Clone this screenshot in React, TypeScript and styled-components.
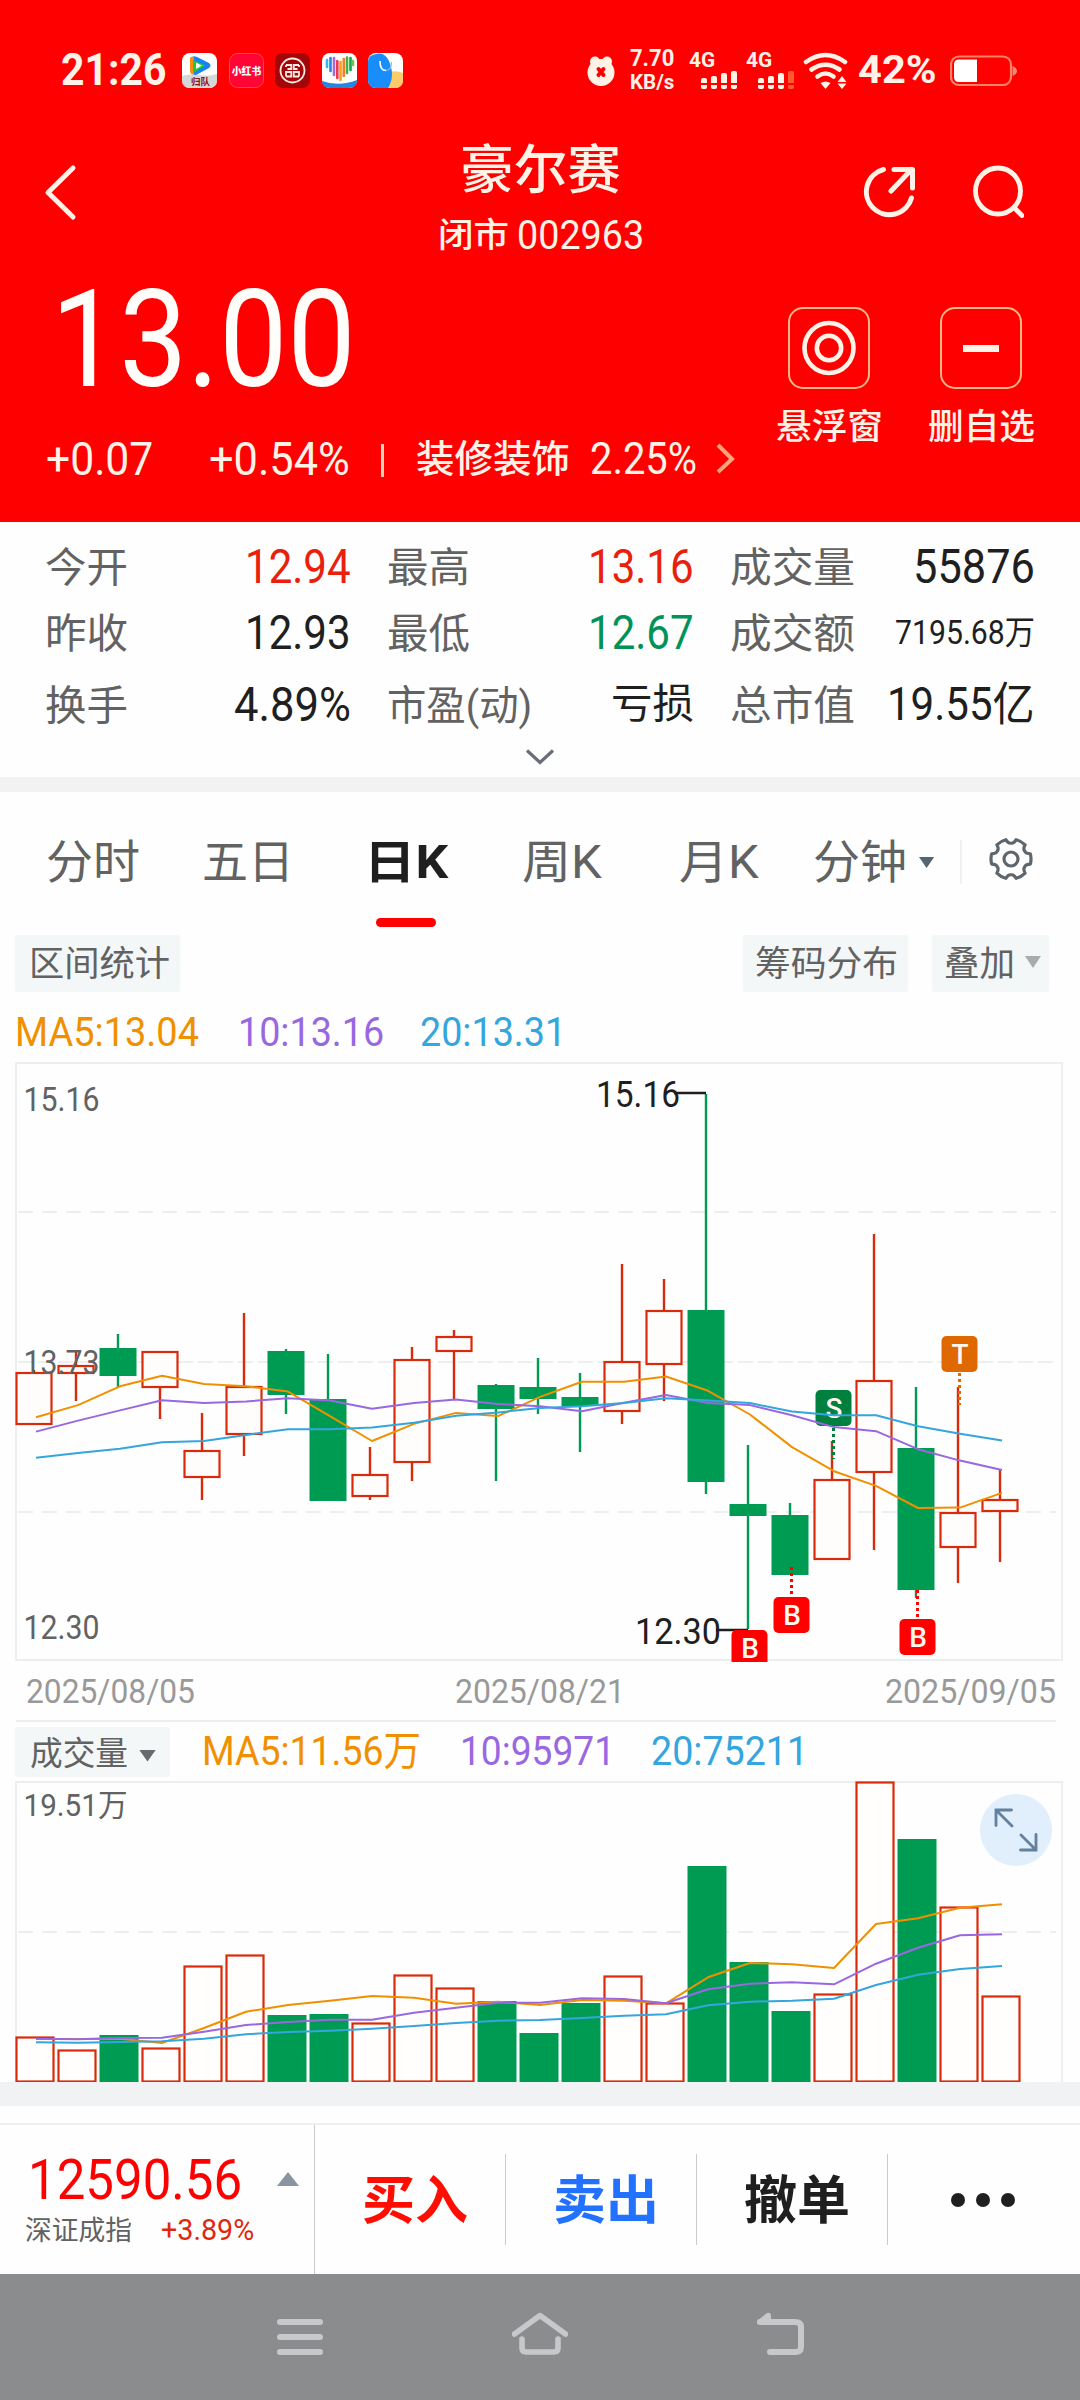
import React, { useLayoutEffect, useRef, useState } from "react";
import styled, { createGlobalStyle } from "styled-components";

const C = {
  red: "#ff0000",
  up: "#d92b0b",
  down: "#009b53",
  cream: "#fff3e8",
  label: "#626262",
  ink: "#1f1f1f",
  ma5: "#f09000",
  ma10: "#9968e0",
  ma20: "#35a5dd",
  line: "#eceeef",
};

const Global = createGlobalStyle`
  html, body { margin: 0; padding: 0; background: #fdfefd; }
  * { box-sizing: border-box; }
  body { font-family: Roboto, "Noto Sans CJK SC", sans-serif; }
  svg { display: block; flex: none; }
`;

/* ---------- text that is condensed to a fixed width ---------- */

const FitBox = styled.span<{ $w: number; $ml: number }>`
  display: block;
  flex: none;
  width: ${(p) => p.$w}px;
  margin-left: ${(p) => p.$ml}px;
  white-space: nowrap;
`;
const FitInner = styled.span<{ $size: number; $color: string; $weight: number }>`
  display: inline-block;
  vertical-align: top;
  transform-origin: 0 50%;
  font-size: ${(p) => p.$size}px;
  line-height: ${(p) => Math.round(p.$size * 1.2)}px;
  color: ${(p) => p.$color};
  font-weight: ${(p) => p.$weight};
`;

type FitProps = { w: number; size: number; color?: string; weight?: number; ml?: number; children: string };

function Fit({ w, size, color = C.ink, weight = 400, ml = 0, children }: FitProps) {
  const ref = useRef<HTMLSpanElement>(null);
  const [scale, setScale] = useState(1);
  useLayoutEffect(() => {
    if (ref.current) setScale(w / ref.current.offsetWidth);
  }, [w, size, children]);
  return (
    <FitBox $w={w} $ml={ml}>
      <FitInner ref={ref} $size={size} $color={color} $weight={weight} style={{ transform: `scaleX(${scale})` }}>
        {children}
      </FitInner>
    </FitBox>
  );
}

/* ---------- page ---------- */

const Page = styled.main`
  width: 1080px;
  height: 2400px;
  overflow: hidden;
  display: flex;
  flex-direction: column;
  background: #fdfefd;
`;

/* ---------- red header ---------- */

const Header = styled.header`
  height: 522px;
  background: ${C.red};
`;
const StatusBar = styled.div`
  height: 141px;
  padding: 0 62px 0 60px;
  display: flex;
  align-items: center;
  justify-content: space-between;
`;
const StatusGroup = styled.div`
  display: flex;
  align-items: center;
`;
const AppIcons = styled.div`
  display: flex;
  gap: 11.5px;
  margin-left: 16px;
`;
const Speed = styled.div`
  display: flex;
  flex-direction: column;
  align-items: center;
  margin-left: 15px;
`;
const SpeedLine = styled.div`
  height: 23px;
  display: flex;
  align-items: center;
`;
const Signal = styled.div<{ $ml: number }>`
  margin-left: ${(p) => p.$ml}px;
  width: 49px;
  height: 38px;
`;
const SignalName = styled.div`
  height: 17px;
  display: flex;
  align-items: center;
`;
const SignalBars = styled.div`
  display: flex;
  align-items: flex-end;
  gap: 4px;
  padding-left: 12px;
  height: 20px;
`;
const Bar = styled.i<{ $h: number; $dim?: boolean }>`
  width: 6px;
  height: ${(p) => p.$h}px;
  border-radius: 2px;
  background: linear-gradient(to top, ${(p) => (p.$dim ? "#ff5a2c" : C.cream)} 4px, transparent 4px, transparent 6px, ${(p) => (p.$dim ? "#ff5a2c" : C.cream)} 6px);
`;
const TitleBar = styled.div`
  height: 121px;
  padding: 0 56px 0 42px;
  display: flex;
  justify-content: space-between;
`;
const TitleSide = styled.div<{ $end?: boolean }>`
  width: 240px;
  padding-top: 22px;
  display: flex;
  gap: 57px;
  justify-content: ${(p) => (p.$end ? "flex-end" : "flex-start")};
`;
const Title = styled.div`
  display: flex;
  flex-direction: column;
  align-items: center;
  margin-left: 15px;
  margin-top: -2px;
`;
const SubTitle = styled.div`
  display: flex;
  align-items: center;
  gap: 8px;
  margin-top: 8px;
`;
const Quote = styled.div`
  display: flex;
  justify-content: space-between;
  padding: 0 45px 0 46px;
`;
const Price = styled.div`
  margin-top: -4px;
`;
const ChangeRow = styled.div`
  display: flex;
  align-items: center;
  height: 50px;
  margin-top: 13px;
`;
const Sep = styled.i`
  width: 3px;
  height: 33px;
  background: #ffd2b8;
  margin: 3px 0 0 31px;
`;
const Actions = styled.div`
  display: flex;
  gap: 44px;
  padding-top: 45px;
`;
const Action = styled.div`
  display: flex;
  flex-direction: column;
  align-items: center;
  gap: 18px;
  width: 108px;
`;
const ActionBox = styled.div`
  width: 82px;
  height: 82px;
  border: 2px solid #ffb48a;
  border-radius: 15px;
  display: flex;
  align-items: center;
  justify-content: center;
`;
const Minus = styled.i`
  width: 36px;
  height: 7px;
  background: ${C.cream};
`;

/* ---------- statistics ---------- */

const Stats = styled.section`
  height: 255px;
  padding: 11px 45px 0 45px;
`;
const StatGrid = styled.div`
  display: grid;
  grid-template-columns: 306px 307px 1fr;
  column-gap: 36px;
  grid-template-rows: 67px 66px 77px;
`;
const Stat = styled.div`
  display: flex;
  justify-content: space-between;
  align-items: center;
`;
const StatLabel = styled.div`
  padding-top: 3px;
`;
const Expand = styled.div`
  display: flex;
  justify-content: center;
  margin-top: 4px;
`;
const Band = styled.div<{ $h: number; $c: string }>`
  flex: none;
  height: ${(p) => p.$h}px;
  background: ${(p) => p.$c};
`;

/* ---------- tabs and tools ---------- */

const Tabs = styled.nav`
  height: 138px;
  padding: 29px 46px 0 46px;
  display: flex;
  align-items: flex-start;
`;
const Tab = styled.div<{ $ml: number }>`
  margin-left: ${(p) => p.$ml}px;
  height: 106px;
  display: flex;
  flex-direction: column;
  justify-content: space-between;
  padding-top: 14px;
`;
const Underline = styled.i`
  width: 60px;
  height: 9px;
  border-radius: 5px;
  background: ${C.red};
  margin-left: 12px;
`;
const TabRule = styled.i`
  width: 2px;
  height: 44px;
  margin: 19px 26px 0 26px;
  background: #f0f1f2;
`;
const Caret = styled.i<{ $c: string; $up?: boolean; $w: number; $h: number; $m: string }>`
  width: ${(p) => p.$w}px;
  height: ${(p) => p.$h}px;
  margin: ${(p) => p.$m};
  background: ${(p) => p.$c};
  clip-path: ${(p) => (p.$up ? "polygon(50% 0, 100% 100%, 0 100%)" : "polygon(0 0, 100% 0, 50% 100%)")};
`;
const Gear = styled.div`
  padding-top: 14px;
`;
const Tools = styled.div`
  height: 63px;
  display: flex;
  align-items: center;
  padding: 4px 31px 0 15px;
`;
const Chip = styled.div<{ $w: number; $h: number; $pl: number }>`
  display: flex;
  align-items: center;
  width: ${(p) => p.$w}px;
  height: ${(p) => p.$h}px;
  padding: 3px 0 0 ${(p) => p.$pl}px;
  background: #f4f7f7;
  border-radius: 3px;
`;
const Spacer = styled.i<{ $w?: number }>`
  flex: ${(p) => (p.$w ? `0 0 ${p.$w}px` : "1")};
`;
const Legend = styled.div<{ $h: number; $pt?: number }>`
  height: ${(p) => p.$h}px;
  display: flex;
  align-items: center;
  padding: ${(p) => p.$pt ?? 0}px 0 0 15px;
`;
const Dates = styled.div`
  height: 60px;
  margin: 0 24px 0 16px;
  padding: 0 0 0 10px;
  display: flex;
  align-items: center;
  justify-content: space-between;
  border-bottom: 2px solid ${C.line};
`;
const VolumeWrap = styled.div`
  position: relative;
  height: 301px;
`;
const ZoomButton = styled.div`
  position: absolute;
  right: 28px;
  top: 13px;
  width: 72px;
  height: 72px;
  border-radius: 50%;
  background: #e0effb;
`;

/* ---------- trade bar and system navigation ---------- */

const TradeBar = styled.footer`
  margin-top: 17px;
  height: 151px;
  border-top: 2px solid #eef0f1;
  display: flex;
`;
const IndexCell = styled.div`
  width: 315px;
  border-right: 1px solid #c9cccf;
  padding: 22px 0 0 26px;
  display: flex;
`;
const IndexText = styled.div`
  width: 232px;
`;
const IndexSub = styled.div`
  display: flex;
  align-items: center;
  margin-top: -1px;
`;
const TradeButton = styled.div<{ $last?: boolean }>`
  width: 191px;
  height: 91px;
  margin-top: 29px;
  padding: ${(p) => (p.$last ? "0 2px 0 0" : "5px 0 0 9px")};
  display: flex;
  align-items: center;
  justify-content: center;
  border-right: ${(p) => (p.$last ? "0" : "1px solid #c9cccf")};
`;
const Dots = styled.div`
  display: flex;
  gap: 11px;
`;
const Dot = styled.i`
  width: 14px;
  height: 14px;
  border-radius: 50%;
  background: ${C.ink};
`;
const SystemNav = styled.div`
  height: 126px;
  background: #8a8c8e;
  display: flex;
  justify-content: center;
  gap: 184px;
  padding-top: 35px;
`;

/* ---------- chart data ---------- */

type Candle = { up: boolean; top: number; bottom: number; high: number; low: number; vol: number };
const K = (up: number, top: number, bottom: number, high: number, low: number, vol: number): Candle => ({
  up: !!up, top, bottom, high, low, vol,
});

const candles: Candle[] = [
  K(1, 1373, 1424, 1370, 1424, 2037),
  K(1, 1366, 1373, 1352, 1401, 2050),
  K(0, 1348, 1376, 1334, 1388, 2035),
  K(1, 1352, 1387, 1352, 1419, 2048),
  K(1, 1451, 1477, 1413, 1500, 1966),
  K(1, 1387, 1434, 1313, 1456, 1955),
  K(0, 1351, 1395, 1349, 1414, 2015),
  K(0, 1399, 1501, 1354, 1501, 2014),
  K(1, 1475, 1496, 1447, 1500, 2023),
  K(1, 1360, 1462, 1347, 1481, 1975),
  K(1, 1337, 1351, 1330, 1400, 1988),
  K(0, 1385, 1409, 1384, 1481, 2001),
  K(0, 1387, 1399, 1358, 1414, 2033),
  K(0, 1397, 1406, 1373, 1452, 2003),
  K(1, 1362, 1411, 1264, 1424, 1976),
  K(1, 1311, 1364, 1279, 1401, 2003),
  K(0, 1310, 1482, 1094, 1494, 1866),
  K(0, 1504, 1516, 1445, 1629, 1962),
  K(0, 1515, 1575, 1503, 1575, 2011),
  K(1, 1480, 1559, 1441, 1559, 1994),
  K(1, 1381, 1472, 1234, 1550, 1782),
  K(0, 1448, 1590, 1387, 1598, 1839),
  K(1, 1513, 1547, 1387, 1583, 1907),
  K(1, 1500, 1511, 1470, 1562, 1996),
];

const price = {
  ma5: [900, 870, 824, 798, 818, 824, 837, 897, 958, 916, 889, 897, 850, 813, 813, 800, 835, 893, 973, 1032, 1068, 1122, 1121, 1085],
  ma10: [935, 908, 883, 858, 865, 861, 853, 859, 879, 865, 856, 867, 873, 885, 864, 845, 865, 870, 895, 924, 934, 978, 1006, 1029],
  ma20: [999, 987, 977, 961, 958, 943, 929, 929, 925, 913, 896, 888, 877, 873, 865, 853, 859, 865, 886, 895, 895, 922, 940, 957],
};
const volume = {
  ma5: [1167, 1167, 1166, 1179, 1134, 1085, 1065, 1052, 1038, 1043, 1061, 1055, 1065, 1050, 1052, 1060, 982, 939, 943, 954, 822, 805, 773, 763],
  ma10: [1166, 1168, 1164, 1163, 1145, 1125, 1116, 1109, 1109, 1088, 1073, 1058, 1058, 1045, 1047, 1060, 1018, 1001, 997, 1003, 941, 893, 856, 853],
  ma20: [1177, 1178, 1176, 1174, 1166, 1153, 1146, 1142, 1136, 1128, 1119, 1112, 1110, 1104, 1097, 1093, 1066, 1055, 1052, 1046, 1005, 974, 957, 948],
};

const STEP = 42;
const toPoints = (values: number[], base: number, scale: number) =>
  values.map((v, i) => `${36 + STEP * i},${(base + v / scale).toFixed(1)}`).join(" ");

function Lines({ set, base, scale }: { set: typeof price; base: number; scale: number }) {
  return (
    <g fill="none" strokeWidth="2" strokeLinejoin="round">
      <polyline points={toPoints(set.ma5, base, scale)} stroke={C.ma5} />
      <polyline points={toPoints(set.ma10, base, scale)} stroke={C.ma10} />
      <polyline points={toPoints(set.ma20, base, scale)} stroke={C.ma20} />
    </g>
  );
}

const ChartText = styled.text<{ $size: number; $c: string; $weight?: number }>`
  font-family: Roboto, "Noto Sans CJK SC", sans-serif;
  font-size: ${(p) => p.$size}px;
  font-weight: ${(p) => p.$weight ?? 400};
  fill: ${(p) => p.$c};
`;

function Label({ x, y, w, size, c, children }: { x: number; y: number; w: number; size: number; c: string; children: string }) {
  return (
    <ChartText x={x} y={y} $size={size} $c={c} textLength={w} lengthAdjust="spacingAndGlyphs">
      {children}
    </ChartText>
  );
}

type MarkProps = { x: number; y: number; c: string; t: string; from?: number; to?: number };
function Mark({ x, y, c, t, from, to }: MarkProps) {
  return (
    <g>
      {from !== undefined && (
        <line x1={x} x2={x} y1={from} y2={to} stroke={c} strokeWidth="3" strokeDasharray="3 3" />
      )}
      <rect x={x - 18} y={y} width="36" height="36" rx="5" fill={c} />
      <ChartText x={x + 0.5} y={y + 28} $size={28} $c="#fff8f0" $weight={500} textAnchor="middle">
        {t}
      </ChartText>
    </g>
  );
}

function PriceChart() {
  return (
    <svg width="1080" height="600" viewBox="0 1062 1080 600">
      <g stroke={C.line} strokeWidth="2" fill="none">
        <path d="M16 1063H1062V1660H16Z" />
        <path d="M18 1212H1056M18 1512H1056" strokeDasharray="15 9" />
        <path d="M18 1362H1056" strokeDasharray="15 5" />
      </g>
      {candles.map((k, i) => {
        const cx = 34 + STEP * i;
        const col = k.up ? C.up : C.down;
        return (
          <g key={i}>
            <path d={`M${cx} ${k.high}V${k.top}M${cx} ${k.bottom}V${k.low}`} stroke={col} strokeWidth="2.4" />
            {k.up ? (
              <rect x={cx - 17.5} y={k.top} width="35" height={k.bottom - k.top} fill="#fffdfc" stroke={col} strokeWidth="2.2" />
            ) : (
              <rect x={cx - 18.5} y={k.top} width="37" height={k.bottom - k.top} fill={col} />
            )}
          </g>
        );
      })}
      <Label x={23.5} y={1111} w={76} size={33} c={C.label}>15.16</Label>
      <Label x={23.5} y={1374} w={76} size={33} c={C.label}>13.73</Label>
      <Label x={23.5} y={1639} w={76} size={33} c={C.label}>12.30</Label>
      <Label x={596} y={1107} w={84} size={36} c={C.ink}>15.16</Label>
      <Label x={635} y={1644} w={86} size={36} c={C.ink}>12.30</Label>
      <path d="M674 1093H706M716 1630H748" stroke={C.ink} strokeWidth="2.4" />
      <Mark x={833.5} y={1390} c="#00803f" t="S" from={1428} to={1459} />
      <Mark x={959.5} y={1336} c="#e06800" t="T" from={1373} to={1405} />
      <Mark x={749.5} y={1630} c={C.red} t="B" />
      <Mark x={791.5} y={1597} c={C.red} t="B" from={1567} to={1596} />
      <Mark x={917.5} y={1619} c={C.red} t="B" from={1590} to={1618} />
      <Lines set={price} base={1050} scale={2.45} />
    </svg>
  );
}

function VolumeChart() {
  return (
    <svg width="1080" height="301" viewBox="0 1781 1080 301">
      <g stroke={C.line} strokeWidth="2" fill="none">
        <path d="M16 2082V1782H1062V2082" />
        <path d="M18 1932H1056" strokeDasharray="15 9" />
      </g>
      {candles.map((k, i) => {
        const x = 15.5 + STEP * i;
        return k.up ? (
          <rect key={i} x={x + 1} y={k.vol + 0.5} width="37" height={2081 - k.vol} fill="#fffefd" stroke={C.up} strokeWidth="2.2" />
        ) : (
          <rect key={i} x={x} y={k.vol} width="39" height={2082 - k.vol} fill={C.down} />
        );
      })}
      <Label x={23.5} y={1815.5} w={104} size={31} c={C.label}>19.51万</Label>
      <Lines set={volume} base={1650} scale={3} />
    </svg>
  );
}

/* gear outline: a circle with six rounded notches */
const polar = (deg: number, r: number) => {
  const a = (deg * Math.PI) / 180;
  return `${(23 + r * Math.cos(a)).toFixed(2)} ${(24 + r * Math.sin(a)).toFixed(2)}`;
};
const gearPath =
  [0, 1, 2, 3, 4, 5]
    .map((n) => {
      const a = -90 + 60 * n;
      return `${n ? "A20 20 0 0 1" : "M"}${polar(a - 15, 20)}Q${polar(a - 10, 15.5)} ${polar(a, 15.8)}Q${polar(a + 10, 15.5)} ${polar(a + 15, 20)}`;
    })
    .join("") + `A20 20 0 0 1 ${polar(-105, 20)}Z`;

/* ---------- status icons ---------- */

function StatusApps() {
  return (
    <AppIcons>
      <svg width="35" height="35" viewBox="0 0 35 35">
        <rect width="35" height="35" rx="8" fill="#fff" />
        <path d="M0 23Q8 20 17 22T35 21V27Q35 35 27 35H8Q0 35 0 27Z" fill="#d6d8d5" />
        <path d="M9 5Q11 2 15 4L27 10Q30 12.500 27 15L14 22Q10 22 9 19Z" fill="#1185f5" />
        <path d="M8 5Q9 3 12 4L12 21Q9 22 8 19Z" fill="#ff8a13" />
        <path d="M11 7L23 12.500L11 20Z" fill="#21cc28" />
        <path d="M14 9.500L20 12.500L14 16Z" fill="#fff" />
        <ChartText x="18.500" y="32" $size={9.5} $c="#8c1020" $weight={700} textAnchor="middle">归队</ChartText>
      </svg>
      <svg width="35" height="35" viewBox="0 0 35 35">
        <rect x=".5" y=".5" width="34" height="34" rx="8" fill="#ff0536" stroke="#ff4a3a" />
        <ChartText x="17.500" y="21.500" $size={9.8} $c="#fff" $weight={900} textAnchor="middle">小红书</ChartText>
      </svg>
      <svg width="35" height="35" viewBox="0 0 35 35">
        <rect width="35" height="35" rx="8" fill="#a30508" />
        <g fill="none" stroke="#ffe9e4" strokeWidth="1.800">
          <circle cx="17.500" cy="17.500" r="12" />
          <path d="M11 12H16.300V16H12.500M11 23.500H16.300V19H11V23.500M24 12H18.800V16H22.500M24 23.500H18.800V19H24V23.500M11 12V14M24 12V14" />
        </g>
      </svg>
      <svg width="35" height="35" viewBox="0 0 35 35">
        <rect width="35" height="35" rx="8" fill="#fff" />
        <path d="M0 28Q17 34 35 27Q35 35 27 35H8Q0 35 0 28Z" fill="#2585e0" />
        <g strokeWidth="2.600" strokeLinecap="round">
          <path d="M5 7V14" stroke="#38b4ef" />
          <path d="M8.500 5V18" stroke="#2586df" />
          <path d="M12 5V22" stroke="#a869d4" />
          <path d="M15.300 8V25" stroke="#ee3b4b" />
          <path d="M18.500 9V27" stroke="#f6a219" />
          <path d="M21.800 6V23" stroke="#ef7f28" />
          <path d="M25 4.500V20" stroke="#39b54a" />
          <path d="M28.500 5V17" stroke="#0da845" />
          <path d="M31 8V12" stroke="#74c642" />
        </g>
      </svg>
      <svg width="35" height="35" viewBox="0 0 35 35">
        <rect width="35" height="35" rx="8" fill="#fff" />
        <path d="M21 19Q29 17 35 20V27Q35 35 27 35H18Z" fill="#fdcb69" />
        <path d="M8 1Q15-1 20 6Q28 22 20 35H8Q0 35 0 27V9Q0 2 8 1Z" fill="#188dfb" />
        <path d="M12 8Q12 17.500 18 17.500" fill="none" stroke="#fff" strokeWidth="1.600" />
        <path d="M18 17.500Q23.500 17 23.500 9" fill="none" stroke="#8fb8d8" strokeWidth="1.200" />
      </svg>
    </AppIcons>
  );
}

function StatusRight() {
  return (
    <StatusGroup>
      <svg width="28" height="32" viewBox="0 0 28 32">
        <circle cx="8" cy="6.500" r="5" fill={C.cream} />
        <circle cx="20" cy="6.500" r="5" fill={C.cream} />
        <ellipse cx="14" cy="17.500" rx="13.500" ry="13.500" fill={C.cream} />
        <path d="M11.500 14L16.500 20M16.500 14L11.500 20" stroke={C.red} strokeWidth="4" strokeLinecap="round" />
      </svg>
      <Speed>
        <SpeedLine><Fit w={44} size={23} weight={700} color={C.cream}>7.70</Fit></SpeedLine>
        <SpeedLine><Fit w={44} size={21} weight={700} color={C.cream}>KB/s</Fit></SpeedLine>
      </Speed>
      <Signal $ml={15}>
        <SignalName><Fit w={26} size={20} weight={700} color={C.cream}>4G</Fit></SignalName>
        <SignalBars><Bar $h={11} /><Bar $h={13} /><Bar $h={16} /><Bar $h={18} /></SignalBars>
      </Signal>
      <Signal $ml={8}>
        <SignalName><Fit w={26} size={20} weight={700} color={C.cream}>4G</Fit></SignalName>
        <SignalBars><Bar $h={11} /><Bar $h={13} /><Bar $h={16} /><Bar $h={18} $dim /></SignalBars>
      </Signal>
      <svg width="46" height="38" viewBox="0 0 46 38" style={{ marginLeft: 8 }}>
        <g fill="none" stroke={C.cream} strokeWidth="4.600" strokeLinecap="round">
          <path d="M3 10Q22.500-4 42 10" />
          <path d="M8.500 17.500Q22.500 8 36.500 17.500" />
          <path d="M14.500 24.500Q22.500 18.500 30.500 24.500" />
        </g>
        <path d="M22.500 37L17.500 31Q22.500 28 27.500 31Z" fill={C.cream} />
        <path d="M39 24L43.500 30H34.500ZM39 37L43.500 31.500H34.500Z" fill={C.cream} />
      </svg>
      <Fit ml={9} w={79} size={39} weight={700} color={C.cream}>42%</Fit>
      <svg width="68" height="32" viewBox="0 0 68 32" style={{ marginLeft: 13 }}>
        <rect x="1" y="1.500" width="60" height="28.500" rx="8" fill="none" stroke="#ff8266" strokeWidth="2.200" />
        <path d="M9 4.500H27V27H9Q4 27 4 22V9.500Q4 4.500 9 4.500Z" fill="#fff" />
        <path d="M62.500 11Q67 13 67 16T62.500 21Z" fill="#e88a72" />
      </svg>
    </StatusGroup>
  );
}

type StatItem = { label: string; lw: number; value: string; vw: number; size?: number; color?: string };
const stats: StatItem[] = [
  { label: "今开", lw: 83, value: "12.94", vw: 106, color: "#e8200c" },
  { label: "最高", lw: 83, value: "13.16", vw: 106, color: "#e8200c" },
  { label: "成交量", lw: 125, value: "55876", vw: 122 },
  { label: "昨收", lw: 83, value: "12.93", vw: 106 },
  { label: "最低", lw: 83, value: "12.67", vw: 106, color: "#009358" },
  { label: "成交额", lw: 125, value: "7195.68万", vw: 140, size: 33 },
  { label: "换手", lw: 83, value: "4.89%", vw: 117 },
  { label: "市盈(动)", lw: 145, value: "亏损", vw: 83, size: 41 },
  { label: "总市值", lw: 125, value: "19.55亿", vw: 148, size: 46 },
];

const tabs = [
  { name: "分时", w: 94, ml: 0 },
  { name: "五日", w: 92, ml: 62 },
  { name: "日K", w: 84, ml: 70, active: true },
  { name: "周K", w: 80, ml: 74 },
  { name: "月K", w: 80, ml: 77 },
  { name: "分钟", w: 94, ml: 54 },
];

export default function App() {
  return (
    <Page>
      <Global />
      <Header>
        <StatusBar>
          <StatusGroup>
            <Fit ml={1} w={105} size={44} weight={700} color={C.cream}>21:26</Fit>
            <StatusApps />
          </StatusGroup>
          <StatusRight />
        </StatusBar>
        <TitleBar>
          <TitleSide>
            <svg width="36" height="60" viewBox="0 0 36 60">
              <path d="M31 5L6 29.500L31 54" fill="none" stroke={C.cream} strokeWidth="5" strokeLinecap="round" strokeLinejoin="round" />
            </svg>
          </TitleSide>
          <Title>
            <Fit w={161} size={53} weight={500} color={C.cream}>豪尔赛</Fit>
            <SubTitle>
              <Fit w={71} size={34} weight={500} color={C.cream}>闭市</Fit>
              <Fit w={127} size={41} color={C.cream}>002963</Fit>
            </SubTitle>
          </Title>
          <TitleSide $end>
            <svg width="52" height="56" viewBox="0 0 52 56">
              <g fill="none" stroke={C.cream} strokeWidth="5" strokeLinecap="round" strokeLinejoin="round">
                <path d="M20.500 6.500A23 23 0 1 0 48.500 35" />
                <path d="M28 28L48.500 6.500M31 6.500H49.500V25" />
              </g>
            </svg>
            <svg width="52" height="56" viewBox="0 0 52 56">
              <g fill="none" stroke={C.cream} strokeWidth="4.800" strokeLinecap="round">
                <ellipse cx="26" cy="28" rx="22.500" ry="23" />
                <path d="M43 45.500L50 52.500" />
              </g>
            </svg>
          </TitleSide>
        </TitleBar>
        <Quote>
          <Price>
            <Fit ml={5} w={305} size={136} color="#fffefa">13.00</Fit>
            <ChangeRow>
              <Fit w={107} size={47} color={C.cream}>+0.07</Fit>
              <Fit ml={56} w={141} size={47} color={C.cream}>+0.54%</Fit>
              <Sep />
              <Fit ml={32} w={154} size={38} weight={500} color={C.cream}>装修装饰</Fit>
              <Fit ml={20} w={107} size={44} color={C.cream}>2.25%</Fit>
              <svg width="22" height="34" viewBox="0 0 22 34" style={{ marginLeft: 17 }}>
                <path d="M4 3L18 17L4 30" fill="none" stroke="#ffa77c" strokeWidth="4" />
              </svg>
            </ChangeRow>
          </Price>
          <Actions>
            <Action>
              <ActionBox>
                <svg width="56" height="58" viewBox="0 0 56 58">
                  <ellipse cx="28" cy="29" rx="24.500" ry="25" fill="none" stroke={C.cream} strokeWidth="4.600" />
                  <circle cx="28" cy="29" r="12.200" fill="none" stroke={C.cream} strokeWidth="4.600" />
                </svg>
              </ActionBox>
              <Fit w={107} size={35} weight={500} color={C.cream}>悬浮窗</Fit>
            </Action>
            <Action>
              <ActionBox><Minus /></ActionBox>
              <Fit w={107} size={35} weight={500} color={C.cream}>删自选</Fit>
            </Action>
          </Actions>
        </Quote>
      </Header>

      <Stats>
        <StatGrid>
          {stats.map((s) => (
            <Stat key={s.label}>
              <StatLabel><Fit w={s.lw} size={41} color={C.label}>{s.label}</Fit></StatLabel>
              <Fit w={s.vw} size={s.size ?? 48} color={s.color ?? C.ink}>{s.value}</Fit>
            </Stat>
          ))}
        </StatGrid>
        <Expand>
          <svg width="32" height="20" viewBox="0 0 32 20">
            <path d="M3 3.500L16 15.500L29 3.500" fill="none" stroke="#6a6e7a" strokeWidth="3.200" />
          </svg>
        </Expand>
      </Stats>
      <Band $h={15} $c="#f2f2f2" />

      <Tabs>
        {tabs.map((t) => (
          <Tab key={t.name} $ml={t.ml}>
            <Fit w={t.w} size={46} weight={t.active ? 700 : 400} color={t.active ? C.ink : C.label}>{t.name}</Fit>
            {t.active && <Underline />}
          </Tab>
        ))}
        <Caret $c="#536573" $w={17} $h={11} $m="36px 0 0 12px" />
        <TabRule />
        <Gear>
          <svg width="46" height="48" viewBox="0 0 46 48">
            <g fill="none" stroke="#5d666c" strokeWidth="3.200" strokeLinejoin="round">
              <path d={gearPath} />
              <circle cx="23" cy="24" r="7" />
            </g>
          </svg>
        </Gear>
      </Tabs>

      <Tools>
        <Chip $w={165} $h={57} $pl={14}><Fit w={141} size={35} color={C.label}>区间统计</Fit></Chip>
        <Spacer />
        <Chip $w={165} $h={57} $pl={12}><Fit w={143} size={35} color={C.label}>筹码分布</Fit></Chip>
        <Spacer $w={24} />
        <Chip $w={117} $h={57} $pl={12}>
          <Fit w={71} size={35} color={C.label}>叠加</Fit>
          <Caret $c="#a9acae" $w={16} $h={12} $m="0 0 6px 10px" />
        </Chip>
      </Tools>

      <Legend $h={69} $pt={10}>
        <Fit w={184} size={40} color={C.ma5}>MA5:13.04</Fit>
        <Fit ml={39} w={146} size={40} color={C.ma10}>10:13.16</Fit>
        <Fit ml={36} w={146} size={40} color={C.ma20}>20:13.31</Fit>
      </Legend>
      <PriceChart />
      <Dates>
        <Fit w={169} size={34} color="#999999">2025/08/05</Fit>
        <Fit w={170} size={34} color="#999999">2025/08/21</Fit>
        <Fit w={171} size={34} color="#999999">2025/09/05</Fit>
      </Dates>
      <Legend $h={59} $pt={1}>
        <Chip $w={155} $h={50} $pl={15}>
          <Fit w={98} size={33} color={C.label}>成交量</Fit>
          <Caret $c="#66696d" $w={17} $h={12} $m="4px 0 0 11px" />
        </Chip>
        <Fit ml={32} w={219} size={40} color={C.ma5}>MA5:11.56万</Fit>
        <Fit ml={39} w={155} size={40} color={C.ma10}>10:95971</Fit>
        <Fit ml={36} w={157} size={40} color={C.ma20}>20:75211</Fit>
      </Legend>
      <VolumeWrap>
        <VolumeChart />
        <ZoomButton>
          <svg width="72" height="72" viewBox="0 0 72 72">
            <path d="M31.500 16H16V31.500M16 16L32 32M41 41L56 56M40.500 56H56V40.500" fill="none" stroke="#63809f" strokeWidth="2.800" strokeLinecap="round" />
          </svg>
        </ZoomButton>
      </VolumeWrap>
      <Band $h={24} $c="#f0f2f3" />

      <TradeBar>
        <IndexCell>
          <IndexText>
            <Fit ml={2} w={214} size={56} color={C.red}>12590.56</Fit>
            <IndexSub>
              <Fit ml={-1} w={107} size={27} color={C.label}>深证成指</Fit>
              <Fit ml={29} w={93} size={29} color="#e0260c">+3.89%</Fit>
            </IndexSub>
          </IndexText>
          <Caret $up $c="#8a95a1" $w={22} $h={14} $m="25px 0 0 19px" />
        </IndexCell>
        <TradeButton><Fit w={106} size={52} weight={700} color="#ff0d00">买入</Fit></TradeButton>
        <TradeButton><Fit w={106} size={52} weight={700} color="#2272ff">卖出</Fit></TradeButton>
        <TradeButton><Fit w={106} size={52} weight={700}>撤单</Fit></TradeButton>
        <TradeButton $last><Dots><Dot /><Dot /><Dot /></Dots></TradeButton>
      </TradeBar>

      <SystemNav>
        <svg width="56" height="56" viewBox="0 0 56 56">
          <path d="M8 13H48M8 28H48M8 43H48" stroke="#c6c8cb" strokeWidth="6" strokeLinecap="round" />
        </svg>
        <svg width="56" height="56" viewBox="0 0 56 56">
          <path d="M2.500 25L28 6.500L53.500 25M10 30V39Q10 43 14 43H42Q46 43 46 39V30" fill="none" stroke="#c6c8cb" strokeWidth="5.600" strokeLinecap="round" strokeLinejoin="round" />
        </svg>
        <svg width="56" height="56" viewBox="0 0 56 56">
          <path d="M8 13H43Q49 13 49 18V38Q49 43 43 43H18" fill="none" stroke="#c6c8cb" strokeWidth="6" strokeLinecap="round" />
          <path d="M5 12L15 4Q19 3 19 7V15H5Z" fill="#c6c8cb" />
        </svg>
      </SystemNav>
    </Page>
  );
}
